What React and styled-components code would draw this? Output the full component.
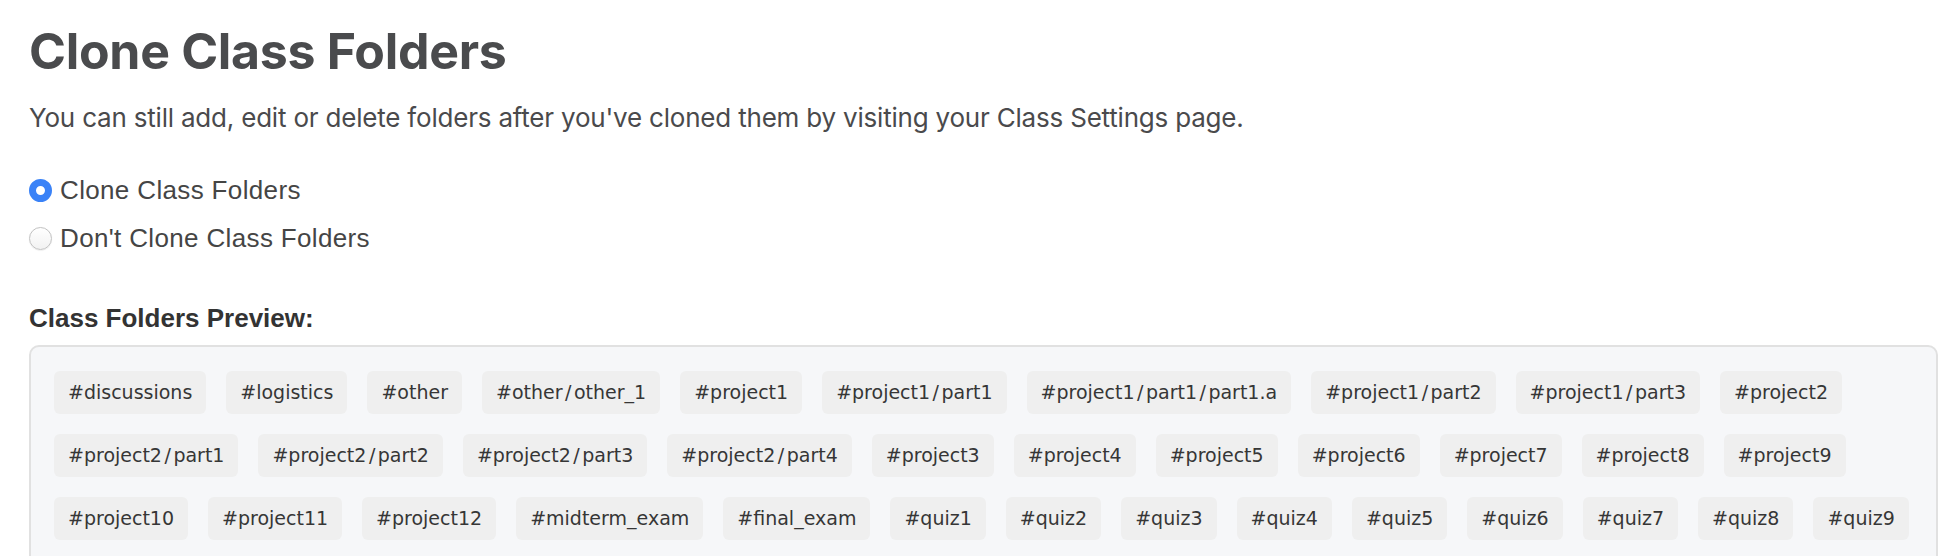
import React, {useState} from 'react'
import styled, {createGlobalStyle} from 'styled-components'

const GlobalStyle = createGlobalStyle`
  body {
    margin: 0;
    background: #ffffff;
    font-family: "Inter", "Liberation Sans", sans-serif;
  }
`

const folders = [
    'discussions', 'logistics', 'other', 'other/other_1',
    'project1', 'project1/part1', 'project1/part1/part1.a', 'project1/part2', 'project1/part3',
    'project2', 'project2/part1', 'project2/part2', 'project2/part3', 'project2/part4',
    'project3', 'project4', 'project5', 'project6', 'project7', 'project8', 'project9',
    'project10', 'project11', 'project12', 'midterm_exam', 'final_exam',
    'quiz1', 'quiz2', 'quiz3', 'quiz4', 'quiz5', 'quiz6', 'quiz7', 'quiz8', 'quiz9',
]

const Page = styled.div`
  padding: 21px 2px 0 29px;
`

const Title = styled.h1`
  margin: 0;
  font-family: "Inter", sans-serif;
  font-size: 50px;
  line-height: 60px;
  font-weight: 700;
  letter-spacing: -0.3px;
  color: #4a4b4d;
`

const Lead = styled.p`
  margin: 21px 0 0;
  font-family: "Inter", sans-serif;
  font-size: 26px;
  line-height: 32px;
  letter-spacing: -0.2px;
  color: #4a4a4c;
`

const Options = styled.div`
  margin-top: 32px;
  display: flex;
  flex-direction: column;
`

const Option = styled.label`
  height: 48px;
  display: flex;
  align-items: center;
  gap: 8px;
  font-family: "Liberation Sans", Arial, sans-serif;
  font-size: 26px;
  letter-spacing: 0.35px;
  color: #454545;
  cursor: pointer;
`

const Radio = styled.input.attrs({type: 'radio'})`
  appearance: none;
  margin: 0;
  width: 23px;
  height: 23px;
  border-radius: 50%;
  box-sizing: border-box;
  border: 1px solid #c2c2c2;
  background: linear-gradient(#ffffff, #f2f2f2);
  box-shadow: 0 0.5px 1px rgba(0, 0, 0, 0.1);

  &:checked {
    border: 7.5px solid #3a82f7;
    background: #ffffff;
    box-shadow: none;
  }
`

const Heading = styled.h3`
  margin: 41px 0 0;
  font-family: "Liberation Sans", Arial, sans-serif;
  font-size: 26px;
  line-height: 30px;
  font-weight: 700;
  color: #333333;
`

const Preview = styled.div`
  margin-top: 12px;
  display: flex;
  flex-wrap: wrap;
  gap: 20px;
  padding: 24px 23px;
  border: 2px solid #e1e1e1;
  border-radius: 10px;
  background: #f6f7f9;
`

const Tag = styled.span`
  height: 43px;
  padding: 0 14px;
  border-radius: 6px;
  background: #efefef;
  font-family: "DejaVu Sans", sans-serif;
  font-size: 19px;
  line-height: 43px;
  color: #363636;
  white-space: nowrap;
`

// the slash in folder paths sits a little apart from its neighbours
const Slash = styled.span`
  margin: 0 2.5px;
`

const FolderTag = ({path}) => {
    const parts = path.split('/')
    return (
        <Tag>
            #{parts.map((p, i) => (
                <React.Fragment key={i}>
                    {i > 0 && <Slash>/</Slash>}
                    {p}
                </React.Fragment>
            ))}
        </Tag>
    )
}

const App = () => {
    const [clone, setClone] = useState(true)
    return (
        <Page>
            <GlobalStyle />
            <Title>Clone Class Folders</Title>
            <Lead>You can still add, edit or delete folders after you've cloned them by visiting your Class Settings page.</Lead>
            <Options>
                <Option>
                    <Radio name="clone" checked={clone} onChange={() => setClone(true)} />
                    Clone Class Folders
                </Option>
                <Option>
                    <Radio name="clone" checked={!clone} onChange={() => setClone(false)} />
                    Don't Clone Class Folders
                </Option>
            </Options>
            <Heading>Class Folders Preview:</Heading>
            <Preview>
                {folders.map(f => <FolderTag key={f} path={f} />)}
            </Preview>
        </Page>
    )
}

export default App
